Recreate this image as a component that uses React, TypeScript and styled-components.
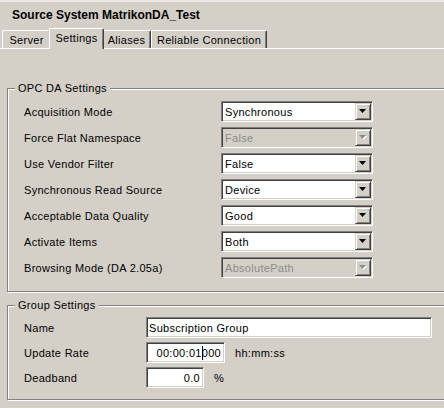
import React from "react";
import styled, { createGlobalStyle, css } from "styled-components";

const Global = createGlobalStyle`
  html, body {
    margin: 0;
    padding: 0;
    background: #d4d0c8;
    overflow: hidden;
  }
  body {
    font-family: "Liberation Sans", Arial, sans-serif;
    font-size: 11px;
    letter-spacing: 0.3px;
    color: #000;
  }
`;

const Window = styled.div`
  width: 444px;
  height: 408px;
  overflow: hidden;
  display: flex;
  flex-direction: column;
  background: #d4d0c8;
`;

const TopStrip = styled.div`
  height: 2px;
  background: #ebe7e4;
`;

const Title = styled.div`
  height: 26px;
  display: flex;
  align-items: center;
  padding-left: 12px;
  font-size: 12px;
  font-weight: bold;
  letter-spacing: 0;
`;

const TabStrip = styled.div`
  height: 20px;
  display: flex;
  align-items: flex-end;
  padding-left: 2px;
  position: relative;
  z-index: 1;
`;

const Tab = styled.div<{ $w: number; $active?: boolean }>`
  box-sizing: border-box;
  width: ${(p) => p.$w}px;
  height: 18px;
  display: flex;
  align-items: center;
  justify-content: center;
  background: #d4d0c8;
  border-top: 1px solid #fff;
  border-left: 1px solid #fff;
  border-right: 1px solid #404040;
  box-shadow: inset -1px 0 0 #808080;
  border-radius: 2px 2px 0 0;
  padding-top: 1px;
  white-space: nowrap;
  ${(p) =>
    p.$active &&
    css`
      width: ${p.$w + 4}px;
      height: 21px;
      margin: 0 -2px -1px;
      padding-top: 0;
      padding-bottom: 2px;
      position: relative;
      z-index: 2;
    `}
`;

const Panel = styled.div`
  flex: 1;
  border-top: 1px solid #fff;
  display: flex;
  flex-direction: column;
  padding: 39px 0 0 7px;
`;

const GroupBox = styled.div<{ $gap?: number }>`
  position: relative;
  margin-right: -20px;
  margin-top: ${(p) => p.$gap ?? 0}px;
  border: 1px solid #808080;
  box-shadow: inset 1px 1px 0 #fff, 1px 1px 0 #fff;
`;

const Legend = styled.div`
  position: absolute;
  top: -7px;
  left: 7px;
  padding: 0 3px;
  line-height: 13px;
  background: #d4d0c8;
`;

const OpcGrid = styled.div`
  display: grid;
  grid-template-columns: 197px 152px;
  grid-auto-rows: 21px;
  row-gap: 5px;
  padding: 12px 0 13px 16px;
`;

const GroupGrid = styled.div`
  display: grid;
  grid-template-columns: 122px auto;
  grid-auto-rows: 21px;
  row-gap: 4px;
  padding: 11px 0 11px 16px;
`;

const Label = styled.div`
  display: flex;
  align-items: center;
  white-space: nowrap;
`;

const sunken = css`
  box-sizing: border-box;
  height: 21px;
  border-style: solid;
  border-width: 1px;
  border-color: #808080 #fff #fff #808080;
  box-shadow: inset 1px 1px 0 #404040, inset -1px -1px 0 #d4d0c8;
  padding: 1px;
`;

const Combo = styled.div<{ $disabled?: boolean }>`
  ${sunken};
  width: 152px;
  display: flex;
  align-items: stretch;
  background: ${(p) => (p.$disabled ? "#d4d0c8" : "#fff")};
  color: ${(p) => (p.$disabled ? "#8c8c8c" : "#000")};
`;

const ComboValue = styled.div`
  flex: 1;
  display: flex;
  align-items: center;
  padding-left: 2px;
  white-space: nowrap;
  overflow: hidden;
`;

const ArrowButton = styled.div`
  box-sizing: border-box;
  width: 16px;
  height: 17px;
  background: #d4d0c8;
  border-style: solid;
  border-width: 1px;
  border-color: #d4d0c8 #404040 #404040 #d4d0c8;
  box-shadow: inset 1px 1px 0 #fff, inset -1px -1px 0 #808080;
  display: flex;
  align-items: center;
  justify-content: center;
`;

const FieldRow = styled.div`
  display: flex;
  align-items: center;
  gap: 10px;
`;

const TextField = styled.div<{ $w: number; $right?: boolean }>`
  ${sunken};
  width: ${(p) => p.$w}px;
  background: #fff;
  display: flex;
  align-items: center;
  justify-content: ${(p) => (p.$right ? "flex-end" : "flex-start")};
  padding: 1px ${(p) => (p.$right ? 3 : 1)}px 1px ${(p) => (p.$right ? 1 : 2)}px;
  white-space: nowrap;
`;

const Caret = styled.span`
  display: inline-block;
  width: 1px;
  height: 14px;
  background: #000;
  margin-right: -1px;
  position: relative;
  z-index: 1;
`;

const Unit = styled.span`
  white-space: nowrap;
`;

function Arrow({ disabled }: { disabled?: boolean }) {
  return (
    <ArrowButton>
      <svg width="8" height="5" viewBox="0 0 8 5">
        {disabled && <polygon points="1,1 8,1 4.5,5" fill="#fff" />}
        <polygon points="0,0 7,0 3.5,4" fill={disabled ? "#8c8c8c" : "#000"} />
      </svg>
    </ArrowButton>
  );
}

const opcRows: { label: string; value: string; disabled?: boolean }[] = [
  { label: "Acquisition Mode", value: "Synchronous" },
  { label: "Force Flat Namespace", value: "False", disabled: true },
  { label: "Use Vendor Filter", value: "False" },
  { label: "Synchronous Read Source", value: "Device" },
  { label: "Acceptable Data Quality", value: "Good" },
  { label: "Activate Items", value: "Both" },
  { label: "Browsing Mode (DA 2.05a)", value: "AbsolutePath", disabled: true },
];

export default function App() {
  return (
    <>
      <Global />
      <Window>
        <TopStrip />
        <Title>Source System MatrikonDA_Test</Title>
        <TabStrip>
          <Tab $w={49}>Server</Tab>
          <Tab $w={51} $active>
            Settings
          </Tab>
          <Tab $w={49}>Aliases</Tab>
          <Tab $w={116}>Reliable Connection</Tab>
        </TabStrip>
        <Panel>
          <GroupBox>
            <Legend>OPC DA Settings</Legend>
            <OpcGrid>
              {opcRows.map((r) => (
                <React.Fragment key={r.label}>
                  <Label>{r.label}</Label>
                  <Combo $disabled={r.disabled}>
                    <ComboValue>{r.value}</ComboValue>
                    <Arrow disabled={r.disabled} />
                  </Combo>
                </React.Fragment>
              ))}
            </OpcGrid>
          </GroupBox>
          <GroupBox $gap={13}>
            <Legend>Group Settings</Legend>
            <GroupGrid>
              <Label>Name</Label>
              <FieldRow>
                <TextField $w={286}>Subscription Group</TextField>
              </FieldRow>
              <Label>Update Rate</Label>
              <FieldRow>
                <TextField $w={79} $right>
                  00:00:01
                  <Caret />
                  000
                </TextField>
                <Unit>hh:mm:ss</Unit>
              </FieldRow>
              <Label>Deadband</Label>
              <FieldRow>
                <TextField $w={58} $right>
                  0.0
                </TextField>
                <Unit>%</Unit>
              </FieldRow>
            </GroupGrid>
          </GroupBox>
        </Panel>
      </Window>
    </>
  );
}
